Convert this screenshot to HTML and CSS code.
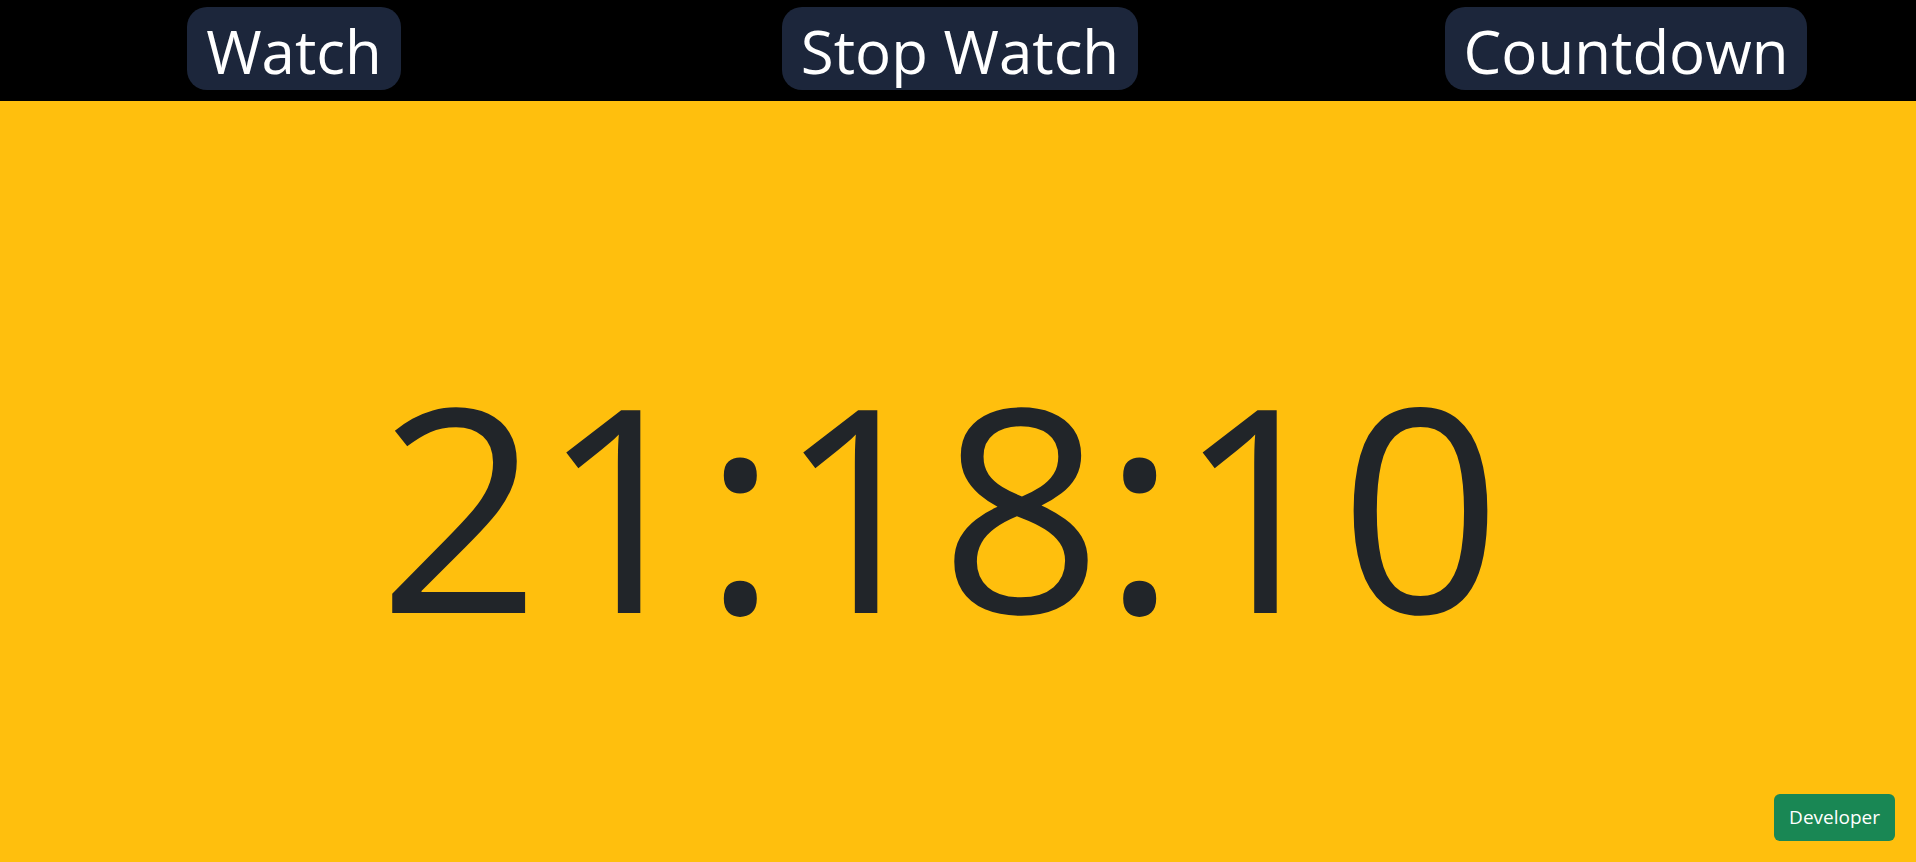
FILE: index.html
```html
<!DOCTYPE html>
<html lang="en">
<head>
<meta charset="utf-8">
<title>Watch</title>
<link rel="stylesheet" href="styles.css">
</head>
<body>
<nav class="topbar">
<button class="tab" type="button">Watch</button>
<button class="tab" type="button">Stop Watch</button>
<button class="tab" type="button">Countdown</button>
</nav>
<main class="stage">
<time class="clock">21:18:10</time>
</main>
<footer class="footer"><a class="developer" href="#">Developer</a></footer>
</body>
</html>
```
FILE: styles.css
```css
* { box-sizing: border-box; }
body {
  margin: 0;
  min-height: 100vh;
  display: flex;
  flex-direction: column;
  background: #ffbf0d;
  color: #212529;
  font-family: "Segoe UI", "Open Sans", "Noto Sans", sans-serif;
}
.topbar {
  display: grid;
  grid-template-columns: repeat(3, 1fr);
  column-gap: 86px;
  justify-items: center;
  padding: 7px 0 11px 4px;
  background: #000;
}
.tab {
  padding: 6px 19px 0;
  border: 0;
  border-radius: 20px;
  background: #1c263b;
  color: #fff;
  font: inherit;
  font-size: 60px;
  line-height: 77px;
  white-space: nowrap;
}
.stage {
  flex: 1;
  display: flex;
  align-items: center;
  justify-content: center;
  padding: 110px 36px 0 0;
}
.clock {
  font-size: 284px;
  line-height: 400px;
}
.footer {
  display: flex;
  justify-content: flex-end;
  padding: 0 21px 21px;
}
.developer {
  padding: 11px 15px;
  border-radius: 6px;
  background: #198754;
  color: #fff;
  font-size: 19px;
  line-height: 25px;
  text-decoration: none;
}
```
